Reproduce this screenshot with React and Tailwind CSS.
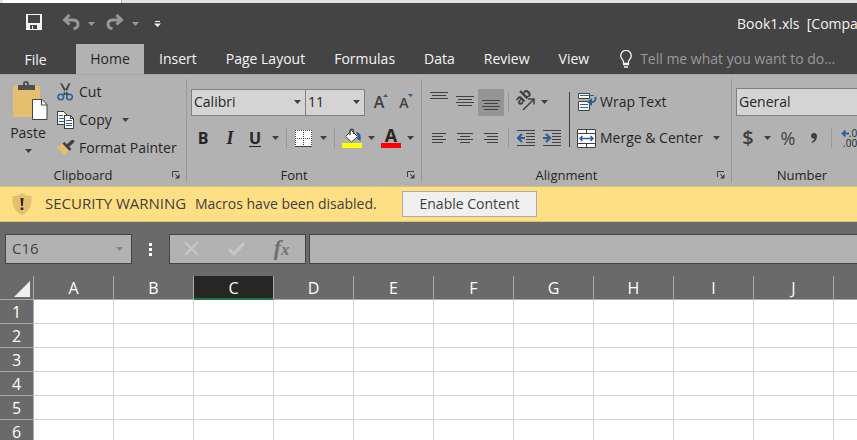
import React from "react";

const TABS = ["Insert", "Page Layout", "Formulas", "Data", "Review", "View"];
const COLUMNS = ["A", "B", "C", "D", "E", "F", "G", "H", "I", "J", "K"];
const ROWS = [1, 2, 3, 4, 5, 6];

function Caret({ className = "text-[#404040]" }) {
  return (
    <svg width="7" height="4" viewBox="0 0 7 4" className={`shrink-0 ${className}`} aria-hidden="true">
      <path d="M0 0h7L3.5 4z" fill="currentColor" />
    </svg>
  );
}

function MenuButton({ label, className = "w-5", caret }) {
  return (
    <button aria-label={label} className={`flex h-7 shrink-0 items-center justify-center ${className}`}>
      <Caret className={caret} />
    </button>
  );
}

function IconButton({ label, className = "w-6", children }) {
  return (
    <button aria-label={label} className={`flex h-7 shrink-0 items-center justify-center ${className}`}>
      {children}
    </button>
  );
}

function Separator() {
  return <div className="h-5 w-px shrink-0 bg-[#999]" />;
}

function Group({ title, launcher = true, className, children }) {
  return (
    <section aria-label={title} className={`flex shrink-0 flex-col ${className}`}>
      <div className="h-[90px]">{children}</div>
      <div className="flex h-5 items-center">
        <h2 className="flex-1 text-center text-[13px] leading-5">{title}</h2>
        {launcher && (
          <button aria-label={`${title} settings`} className="flex w-5 justify-center">
            <svg width="8" height="8" viewBox="0 0 8 8" fill="none" stroke="#404040">
              <path d="M.5 6V.5H7M3 3l3.5 3.5" />
              <path d="M7.5 3v4.5H3z" fill="#404040" stroke="none" />
            </svg>
          </button>
        )}
      </div>
    </section>
  );
}

function GroupLine() {
  return <div className="mt-1 h-[103px] w-px shrink-0 bg-[#999]" />;
}

function Lines({ rows, width = 18, height = 18 }) {
  return (
    <svg width={width} height={height} viewBox={`0 0 ${width} ${height}`} fill="#404040" shapeRendering="crispEdges">
      {rows.map(([x, y, w]) => (
        <rect key={y} x={x} y={y} width={w} height="1" />
      ))}
    </svg>
  );
}

function TitleBar() {
  return (
    <header className="flex h-[41px] items-center bg-[#444] text-[#f4f4f4]">
      <button aria-label="Save" className="-mt-1 ml-[26px]">
        <svg width="16" height="16" viewBox="0 0 16 16" fill="#f4f4f4" fillRule="evenodd" shapeRendering="crispEdges">
          <path d="M0 0h16v16H0zM2 1v8h12V1zM4 11v4h2v-3h1v3h4v-4z" />
        </svg>
      </button>
      <button aria-label="Undo" className="-mt-1 ml-5">
        <svg width="18" height="16" viewBox="0 0 18 16" fill="none" stroke="#999" strokeWidth="3">
          <path d="M2.500 6h8.300c3.200 0 5.200 1.500 5.200 4.200s-2 4.300-4.500 4.300" />
          <path d="M7.500 1 2.500 6l5 4.500" />
        </svg>
      </button>
      <MenuButton label="Undo history" className="w-[22px]" caret="text-[#999]" />
      <button aria-label="Redo" className="-mt-1 ml-1">
        <svg width="18" height="16" viewBox="0 0 18 16" fill="none" stroke="#999" strokeWidth="3">
          <path d="M15.500 6H7.200C4 6 2 7.500 2 10.200s2 4.300 4.500 4.300" />
          <path d="m10.500 1 5 5-5 4.500" />
        </svg>
      </button>
      <MenuButton label="Redo history" className="w-[22px]" caret="text-[#999]" />
      <button aria-label="Customize toolbar" className="ml-2">
        <svg width="7" height="6" viewBox="0 0 7 6" fill="#f4f4f4">
          <path d="M1 0h5v1H1zM0 2.500h7L3.500 6z" />
        </svg>
      </button>
      <h1 className="ml-auto w-[120px] overflow-hidden text-sm whitespace-pre">{"Book1.xls  [Compatibility Mode]"}</h1>
    </header>
  );
}

function TabBar() {
  return (
    <nav className="flex h-[30px] gap-px bg-[#444] text-sm text-[#f4f4f4]">
      <button className="w-[75px] pr-1 pt-px">File</button>
      <button className="w-[68px] bg-[#b2b2b2] text-[#262626]">Home</button>
      {TABS.map((tab) => (
        <button key={tab} className="shrink-0 px-[14px]">
          {tab}
        </button>
      ))}
      <label className="ml-4 flex min-w-0 flex-1 items-center gap-2">
        <svg width="12" height="18" viewBox="0 0 12 18" fill="none" stroke="#f4f4f4" className="shrink-0">
          <path d="M3.500 13.500v-2C3 9.500.7 8.500.7 5.700a5.300 5.300 0 0 1 10.600 0c0 2.800-2.300 3.800-2.800 5.800v2z" strokeWidth="1.300" />
          <path d="M3 14.500h6M4 17h4" strokeWidth="1.500" />
        </svg>
        <input
          aria-label="Tell me what you want to do"
          placeholder="Tell me what you want to do..."
          className="w-full min-w-0 bg-transparent outline-none placeholder:text-[#999] placeholder:opacity-100"
        />
      </label>
    </nav>
  );
}

function ClipboardGroup() {
  return (
    <Group title="Clipboard" className="w-[186px]">
      <div className="flex pt-[2px]">
        <button className="flex w-14 flex-col items-center pt-1">
          <svg width="36" height="40" viewBox="0 0 36 40" className="ml-1">
            <path d="M1 5h27v31H1z" fill="#e5bf6e" />
            <path d="M6 4h5V3a3 3 0 0 1 6 0v1h6v5H6z" fill="#505050" />
            <path d="M13 4h2V2h-2z" fill="#b2b2b2" />
            <path d="M20.500 18.500H30l5 5v15H20.500z" fill="#fff" stroke="#404040" />
            <path d="M29.500 18.500V24H35" fill="none" stroke="#404040" />
          </svg>
          <span className="leading-6">Paste</span>
          <span className="flex h-3 items-center">
            <Caret />
          </span>
        </button>
        <div className="flex flex-col pl-px">
          <button className="flex h-7 items-center gap-1 pt-px">
            <svg width="18" height="18" viewBox="0 0 18 18" fill="none">
              <path d="M3 0l2 .5L11.500 11 9.500 12.500zM13.500 0l-2 .5L6 11l2 1.500z" fill="#404040" />
              <circle cx="3.800" cy="14" r="2.800" stroke="#2b6095" strokeWidth="1.500" />
              <circle cx="12.500" cy="14" r="2.800" stroke="#2b6095" strokeWidth="1.500" />
            </svg>
            Cut
          </button>
          <div className="flex h-7 items-center pt-px">
            <button className="flex items-center gap-1">
              <svg width="18" height="18" viewBox="0 0 18 18" shapeRendering="crispEdges">
                <path d="M.5.500h6l3 3v10h-9z" fill="#fff" stroke="#404040" />
                <path d="M2 4.500h4M2 7.500h5M2 10.500h5" stroke="#2b6095" />
                <path d="M7.500 4.500h6l3 3v10h-9z" fill="#fff" stroke="#404040" />
                <path d="M13.500 4.500v3h3" fill="none" stroke="#404040" />
                <path d="M9 9.500h6M9 12.500h6M9 14.500h6" stroke="#2b6095" />
              </svg>
              Copy
            </button>
            <MenuButton label="Copy options" className="w-[28px]" />
          </div>
          <button className="flex h-7 items-center gap-1 pt-px">
            <svg width="18" height="16" viewBox="0 0 18 16">
              <path d="M0 7l6-3 6 7-5 4z" fill="#e5bf6e" />
              <path d="m5.500 3.500 2-1.500 7 7-2 2z" fill="#404040" />
              <path d="m10.500 6 5-4.500" stroke="#404040" strokeWidth="3.500" strokeLinecap="round" />
            </svg>
            Format Painter
          </button>
        </div>
      </div>
    </Group>
  );
}

function FontGroup() {
  return (
    <Group title="Font" className="w-[234px]">
      <div className="flex flex-col gap-2 pt-[13px] pl-1">
        <div className="flex h-7 items-center">
          <div className="flex items-center">
            <select aria-label="Font" className="h-[27px] w-[115px] appearance-none border-1 border-[#808080] bg-[#d4d4d4] pl-[2px]">
              <option>Calibri</option>
            </select>
            <span className="pointer-events-none -ml-3 flex w-3">
              <Caret />
            </span>
          </div>
          <div className="-ml-px flex items-center">
            <select aria-label="Font size" className="h-[27px] w-[60px] appearance-none border-1 border-[#808080] bg-[#d4d4d4] pl-[2px]">
              <option>11</option>
            </select>
            <span className="pointer-events-none -ml-3 flex w-3">
              <Caret />
            </span>
          </div>
          <IconButton label="Increase font size" className="ml-[3px] w-[26px]">
            <span className="text-base font-semibold text-[#404040]">A</span>
            <svg width="5" height="3" viewBox="0 0 5 3" className="-ml-px mb-[14px]">
              <path d="M0 3h5L2.500 0z" fill="#2b6095" />
            </svg>
          </IconButton>
          <IconButton label="Decrease font size" className="w-6">
            <span className="pt-[2px] text-sm font-semibold text-[#404040]">A</span>
            <svg width="5" height="3" viewBox="0 0 5 3" className="-ml-px mb-[14px]">
              <path d="M0 0h5L2.500 3z" fill="#2b6095" />
            </svg>
          </IconButton>
        </div>
        <div className="flex h-7 items-center">
          <IconButton label="Bold" className="w-6">
            <span className="text-base font-bold">B</span>
          </IconButton>
          <IconButton label="Italic" className="w-[30px]">
            <span className="font-['Liberation_Serif',serif] text-lg font-bold italic">I</span>
          </IconButton>
          <IconButton label="Underline" className="w-5">
            <span className="border-b border-[#262626] text-base leading-4 font-bold">U</span>
          </IconButton>
          <MenuButton label="Underline options" className="w-[21px]" />
          <Separator />
          <IconButton label="Borders" className="ml-2 w-[17px]">
            <svg width="17" height="17" viewBox="0 0 17 17" shapeRendering="crispEdges">
              <path d="M0 0h17v17H0z" fill="#fff" />
              <path d="M.5 0v16M16.500 0v16M8.500 0v16M0 .5h17M0 8.500h17" stroke="#404040" strokeDasharray="1 1" />
              <path d="M0 16.500h17" stroke="#404040" />
            </svg>
          </IconButton>
          <MenuButton label="Border options" className="w-[22px]" />
          <Separator />
          <IconButton label="Fill color" className="ml-[7px] w-5">
            <svg width="20" height="20" viewBox="0 0 20 20">
              <path d="m3.500 8.500 6-6 6 6-6 5.500z" fill="#fff" stroke="#404040" />
              <path d="M8 7V2.500a1.800 1.800 0 0 1 3.500 0V6" fill="none" stroke="#404040" strokeWidth="1.300" />
              <path d="M14 4c4 0 5.500 3.500 4.500 9L15 11l1-2.500z" fill="#2b6095" />
              <path d="M0 15h20v5H0z" fill="#ff0" />
            </svg>
          </IconButton>
          <MenuButton label="Fill options" className="w-[18px]" />
          <IconButton label="Font color" className="w-[22px]">
            <span className="flex w-5 flex-col items-center">
              <span className="h-[15px] text-lg leading-[14px] font-bold">A</span>
              <span className="h-[5px] w-5 bg-[#f00]" />
            </span>
          </IconButton>
          <MenuButton label="Font color options" className="w-4" />
        </div>
      </div>
    </Group>
  );
}

function AlignmentGroup() {
  return (
    <Group title="Alignment" className="w-[309px]">
      <div className="flex pt-[13px] whitespace-nowrap">
        <div className="flex w-[147px] shrink-0 flex-col gap-2 pl-1">
          <div className="flex h-7 items-center">
            <IconButton label="Top align" className="w-[26px]">
              <Lines rows={[[0, 0, 18], [2, 3, 14], [0, 6, 18]]} height={20} />
            </IconButton>
            <IconButton label="Middle align" className="w-[26px]">
              <Lines rows={[[0, 4, 18], [2, 7, 14], [0, 10, 18], [2, 13, 14]]} height={20} />
            </IconButton>
            <button aria-label="Bottom align" className="flex h-[27px] w-[26px] items-center justify-center bg-[#959595]">
              <Lines rows={[[0, 8, 18], [2, 11, 14], [0, 14, 18], [2, 17, 14]]} height={20} />
            </button>
            <div className="w-1" />
            <Separator />
            <IconButton label="Orientation" className="w-8">
              <svg width="20" height="20" viewBox="0 0 20 20" fill="none" stroke="#404040" strokeWidth="1.500" className="overflow-visible">
                <text x="0" y="0" transform="translate(5 14) rotate(-45)" fill="#404040" stroke="none" fontSize="14" fontWeight="700">
                  ab
                </text>
                <path d="M8 18 18.500 7.500M13 7h6v5.500" />
              </svg>
            </IconButton>
            <Caret />
          </div>
          <div className="flex h-7 items-center">
            <IconButton label="Align left" className="w-[26px]">
              <Lines rows={[[0, 0, 14], [0, 3, 11], [0, 6, 14], [0, 9, 11]]} width={14} height={10} />
            </IconButton>
            <IconButton label="Center" className="w-[26px]">
              <Lines rows={[[0, 0, 16], [3, 3, 10], [0, 6, 16], [3, 9, 10]]} width={16} height={10} />
            </IconButton>
            <IconButton label="Align right" className="w-[26px]">
              <Lines rows={[[0, 0, 14], [3, 3, 11], [0, 6, 14], [3, 9, 11]]} width={14} height={10} />
            </IconButton>
            <div className="w-1" />
            <Separator />
            <IconButton label="Decrease indent" className="ml-1 w-[26px]">
              <svg width="18" height="16" viewBox="0 0 18 16">
                <path d="M0 .5h18M9 3.500h9M9 6.500h9M9 9.500h9M9 12.500h9M0 15.500h18" stroke="#404040" />
                <path d="M8 8H2M5 4 1 8l4 4" stroke="#2b6095" strokeWidth="2.200" fill="none" />
              </svg>
            </IconButton>
            <IconButton label="Increase indent" className="w-[26px]">
              <svg width="18" height="16" viewBox="0 0 18 16">
                <path d="M0 .5h18M9 3.500h9M9 6.500h9M9 9.500h9M9 12.500h9M0 15.500h18" stroke="#404040" />
                <path d="M0 8h6M3 4l4 4-4 4" stroke="#2b6095" strokeWidth="2.200" fill="none" />
              </svg>
            </IconButton>
          </div>
        </div>
        <div className="mt-1 h-[55px] w-px shrink-0 bg-[#404040]" />
        <div className="flex flex-col gap-2 pl-[7px]">
          <button className="flex h-7 items-center gap-[3px]">
            <svg width="20" height="19" viewBox="0 0 20 19">
              <path d="M1.500.5h11v5h-11zM1.500 8.500h11v9h-11z" fill="#fff" stroke="#404040" />
              <path d="M3 2.500h14M3 11.500h8M3 14.500h8" stroke="#2b6095" />
              <path d="M18.500 4c.5 3.500-1 5-4.500 5" fill="none" stroke="#2b6095" strokeWidth="2" />
              <path d="M10 9l5-4v8z" fill="#2b6095" />
            </svg>
            Wrap Text
          </button>
          <div className="flex h-7 items-center">
            <button className="flex items-center gap-[3px]">
              <svg width="20" height="19" viewBox="0 0 20 19">
                <path d="M.5.500h18v18H.5z" fill="#fff" stroke="#404040" />
                <path d="M0 4.500h19M0 14.500h19M9.500 0v4M9.500 15v4" stroke="#404040" />
                <path d="M3 9.500h13M5.500 7 3 9.500 5.500 12M13.500 7 16 9.500 13.500 12" stroke="#2b6095" strokeWidth="1.500" fill="none" />
              </svg>
              Merge &amp; Center
            </button>
            <MenuButton label="Merge options" className="w-7" />
          </div>
        </div>
      </div>
    </Group>
  );
}

function NumberGroup() {
  return (
    <Group title="Number" className="w-40">
      <div className="flex flex-col gap-2 pt-[13px] pl-1">
        <select aria-label="Number format" className="h-7 w-full appearance-none border-1 border-[#808080] bg-[#d4d4d4] pl-[2px]">
          <option>General</option>
        </select>
        <div className="flex h-7 items-center">
          <IconButton label="Accounting format" className="w-6">
            <span className="text-xl font-semibold text-[#404040]">$</span>
          </IconButton>
          <MenuButton label="Currency options" className="w-[15px]" />
          <IconButton label="Percent" className="w-[26px]">
            <span className="text-lg font-medium text-[#404040]">%</span>
          </IconButton>
          <IconButton label="Comma style" className="mr-1 w-[26px]">
            <svg width="6" height="10" viewBox="0 0 6 10" fill="#404040">
              <path d="M3 0c2 0 3 1.300 3 3.200C6 6.500 4 9 1 10L.5 9c1.800-1 2.700-2.200 2.800-3.500C1.500 5.800 0 4.600 0 2.900 0 1.200 1.300 0 3 0z" />
            </svg>
          </IconButton>
          <Separator />
          <IconButton label="Increase decimal" className="ml-2 w-[18px]">
            <span className="flex flex-col text-[10px] leading-[10px] font-medium">
              <span className="flex items-center justify-end">
                <svg width="8" height="7" viewBox="0 0 8 7" fill="none" stroke="#2b6095" strokeWidth="1.800">
                  <path d="M8 3.500H2M4.500.5l-3 3 3 3" />
                </svg>
                .0
              </span>
              <span className="text-right">.00</span>
            </span>
          </IconButton>
        </div>
      </div>
    </Group>
  );
}

function SecurityBar() {
  return (
    <div role="alert" className="flex h-9 items-center border-y border-[#dcc07a] bg-[#ffdf84] text-[#404040]">
      <svg width="20" height="22" viewBox="0 0 20 22" className="ml-3">
        <path d="M10 0c3 2.500 6 3 9.500 3 .5 9-1.500 15-9.500 19C2 18 0 12 .5 3 4 3 7 2.500 10 0z" fill="#e5bf6e" />
        <path d="M8.500 5h3l-.7 8H9.200zM8.700 14.500h2.600V17H8.700z" fill="#262626" />
      </svg>
      <strong className="ml-[13px] w-[150px] text-[15px] font-medium">SECURITY WARNING</strong>
      <span className="w-[207px]">Macros have been disabled.</span>
      <button className="h-[26px] w-[135px] border border-[#ababab] bg-[#f0f0f0]">Enable Content</button>
    </div>
  );
}

function FormulaBar() {
  return (
    <div className="flex h-[54px] items-center bg-[#6a6a6a] pl-[5px]">
      <div className="flex h-[30px] w-[127px] items-center border border-[#444] bg-[#b2b2b2]">
        <input aria-label="Name box" defaultValue="C16" className="w-[110px] bg-transparent pl-[6px] text-[15px] text-[#444] outline-none" />
        <Caret className="text-[#808589]" />
      </div>
      <div className="ml-[17px] flex flex-col gap-[2px]">
        <i className="size-[3px] bg-white" />
        <i className="size-[3px] bg-white" />
        <i className="size-[3px] bg-white" />
      </div>
      <div className="ml-[17px] flex h-[30px] w-[137px] items-center border border-[#444] bg-[#b2b2b2]">
        <button aria-label="Cancel" className="flex w-[43px] justify-center">
          <svg width="15" height="14" viewBox="0 0 15 14" fill="none" stroke="#c8c8c8" strokeWidth="2">
            <path d="m1 0 13 13M14 0 1 13" />
          </svg>
        </button>
        <button aria-label="Enter" className="flex w-[47px] justify-center">
          <svg width="17" height="14" viewBox="0 0 17 14" fill="none" stroke="#c8c8c8" strokeWidth="3">
            <path d="m1 7 5 5L16 1" />
          </svg>
        </button>
        <button
          aria-label="Insert function"
          className="w-[43px] font-['Liberation_Serif',serif] text-[22px] leading-6 font-bold text-[#6f6f6f] italic"
        >
          f<span className="text-base">x</span>
        </button>
      </div>
      <input
        aria-label="Formula"
        className="ml-[3px] h-[30px] min-w-0 flex-1 border border-r-0 border-[#444] bg-[#b2b2b2] px-2 outline-none"
      />
    </div>
  );
}

function Sheet() {
  return (
    <div className="overflow-hidden bg-[#6a6a6a]">
      <table className="w-[914px] table-fixed border-separate border-spacing-0 text-base leading-5">
        <thead>
          <tr className="h-6 text-white">
            <th className="w-[34px] border-r border-b border-[#ababab] p-0" aria-label="Select all">
              <svg width="16" height="16" viewBox="0 0 16 16" className="mt-[2px] ml-[14px]">
                <path d="M16 0v16H0z" fill="#f0f0f0" />
              </svg>
            </th>
            {COLUMNS.map((name) => (
              <th
                key={name}
                className={
                  name === "C"
                    ? "w-20 border-r border-b border-r-[#ababab] border-b-[#217346] bg-[#262626] p-0 font-normal shadow-[inset_0_-1px_0_#217346]"
                    : "w-20 border-r border-b border-[#ababab] p-0 font-normal"
                }
              >
                {name}
              </th>
            ))}
          </tr>
        </thead>
        <tbody>
          {ROWS.map((row) => (
            <tr key={row} className="h-6">
              <th className="border-r border-b border-[#ababab] p-0 font-normal text-white">{row}</th>
              {COLUMNS.map((name) => (
                <td key={name} className="border-r border-b border-[#d4d4d4] bg-white p-0" />
              ))}
            </tr>
          ))}
        </tbody>
      </table>
    </div>
  );
}

export default function App() {
  return (
    <div className="h-screen overflow-hidden bg-white font-['Open_Sans','Noto_Sans',sans-serif] text-sm text-[#262626]">
      <div className="flex h-[3px] bg-[#e1e1e6] pl-[3px]">
        <div className="w-[119px] border-r border-[#ababab] bg-white" />
      </div>
      <TitleBar />
      <TabBar />
      <main>
        <div className="flex h-28 overflow-hidden border-t border-[#a6a6a6] bg-[#b2b2b2]">
          <ClipboardGroup />
          <GroupLine />
          <FontGroup />
          <GroupLine />
          <AlignmentGroup />
          <GroupLine />
          <NumberGroup />
        </div>
        <SecurityBar />
        <FormulaBar />
        <Sheet />
      </main>
    </div>
  );
}
